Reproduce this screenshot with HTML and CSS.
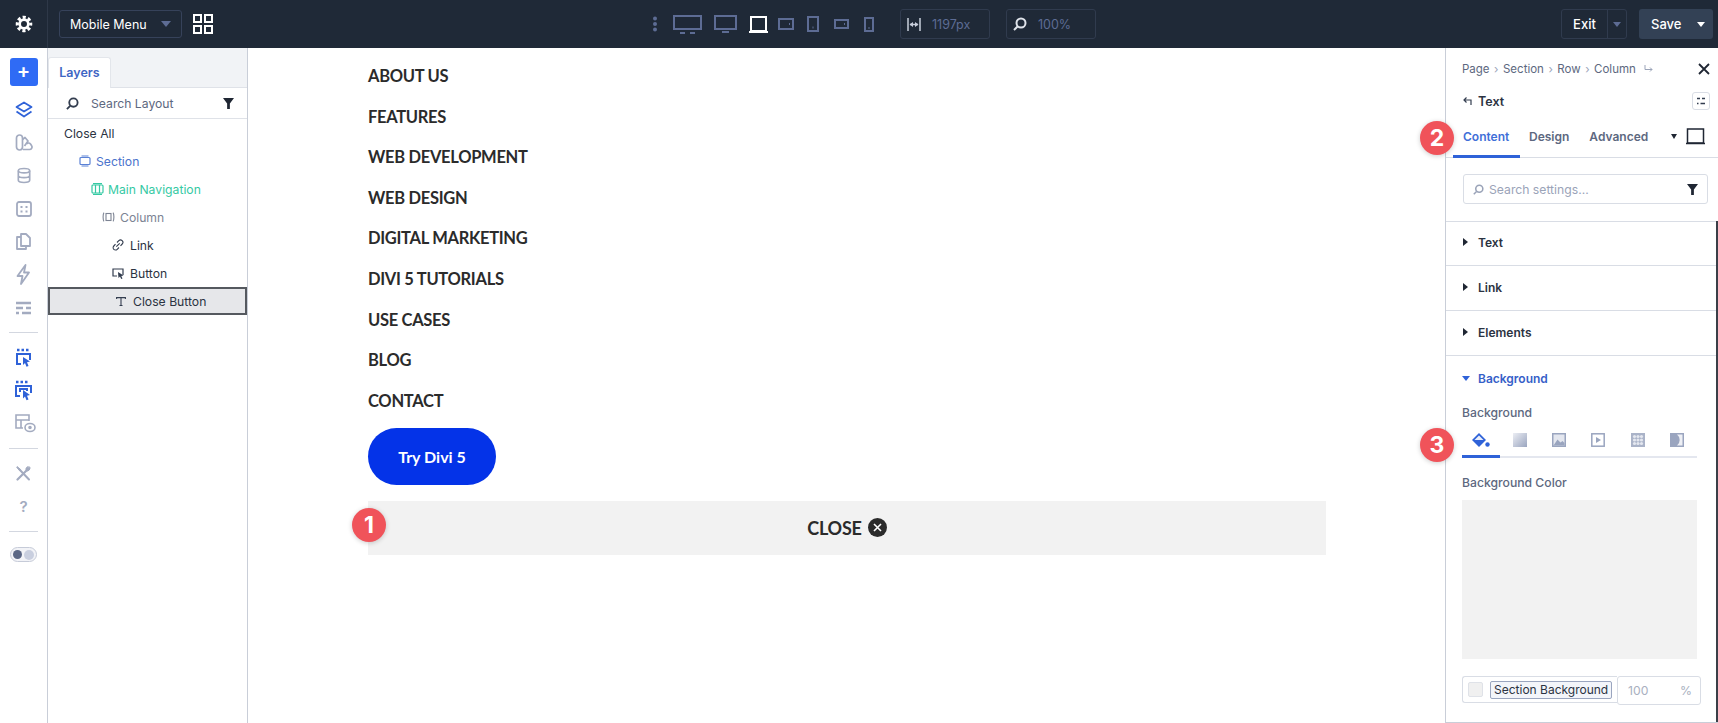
FILE: index.html
```html
<!DOCTYPE html>
<html lang="en">
<head>
<meta charset="utf-8">
<title>Mobile Menu</title>
<link rel="stylesheet" href="styles.css">
</head>
<body>
<header class="topbar">
  <div class="gear-cell">
    <svg width="18" height="18" viewBox="0 0 20 20" fill="none" stroke="#fff"><circle cx="10" cy="10" r="7.500" stroke-width="3.400" stroke-dasharray="3.400 2.490" stroke-dashoffset="1.700"/><circle cx="10" cy="10" r="4.800" stroke-width="3"/></svg>
  </div>
  <div class="select"><span>Mobile Menu</span><i class="caret caret-dim caret-lg"></i></div>
  <svg class="grid-icon" width="20" height="20" viewBox="0 0 20 20" fill="none" stroke="#fff" stroke-width="2"><rect x="1" y="1" width="7" height="7"/><rect x="12" y="1" width="7" height="7"/><rect x="1" y="12" width="7" height="7"/><rect x="12" y="12" width="7" height="7"/></svg>

  <div class="devices">
    <svg width="6" height="16" viewBox="0 0 6 16" fill="#5d6c94"><circle cx="3" cy="2.500" r="2"/><circle cx="3" cy="8" r="2"/><circle cx="3" cy="13.500" r="2"/></svg>
    <svg class="d1" width="29" height="19" viewBox="0 0 29 19" fill="none" stroke="#5d6c94" stroke-width="2"><rect x="1" y="1" width="27" height="13"/><path d="M7 18h5M17 18h5"/></svg>
    <svg class="d2" width="23" height="18" viewBox="0 0 23 18" fill="none" stroke="#5d6c94" stroke-width="2"><rect x="1" y="1" width="21" height="13"/><path d="M8 17h7"/></svg>
    <svg class="d3" width="19" height="17" viewBox="0 0 19 17" fill="none" stroke="#fff" stroke-width="2"><rect x="2" y="1" width="15" height="14"/><path d="M0 16h19"/></svg>
    <svg class="d4" width="16" height="12" viewBox="0 0 16 12" fill="none" stroke="#5d6c94" stroke-width="2"><rect x="1" y="1" width="14" height="10"/><path d="M11 6h1"/></svg>
    <svg class="d5" width="12" height="16" viewBox="0 0 12 16" fill="none" stroke="#5d6c94" stroke-width="2"><rect x="1" y="1" width="10" height="14"/><path d="M5.500 11.500h1"/></svg>
    <svg class="d6" width="15" height="10" viewBox="0 0 15 10" fill="none" stroke="#5d6c94" stroke-width="2"><rect x="1" y="1" width="13" height="8"/><path d="M10 5h1"/></svg>
    <svg class="d7" width="10" height="15" viewBox="0 0 10 15" fill="none" stroke="#5d6c94" stroke-width="2"><rect x="1" y="1" width="8" height="13"/><path d="M4.500 11h1"/></svg>
  </div>

  <div class="field field-width">
    <svg width="14" height="13" viewBox="0 0 14 13" fill="none" stroke="#c9cfdc" stroke-width="1.500"><path d="M1 0v13M13 0v13M3 6.500h8"/><path fill="#c9cfdc" stroke="none" d="M2.500 6.500 6 4v5zM11.500 6.500 8 4v5z"/></svg>
    <span>1197px</span>
  </div>
  <div class="field field-zoom">
    <svg width="14" height="14" viewBox="0 0 14 14" fill="none" stroke="#dfe3ea" stroke-width="2"><circle cx="8" cy="6" r="4.500"/><path d="M4.500 9.500 1 13"/></svg>
    <span>100%</span>
  </div>

  <div class="exit">
    <span class="exit-label">Exit</span>
    <span class="exit-caret"><i class="caret caret-dim"></i></span>
  </div>
  <div class="save"><span>Save</span><i class="caret caret-white"></i></div>
</header>

<div class="workspace">
  <nav class="rail">
    <div class="plus">+</div>
    <div class="rail-item">
      <svg width="18" height="18" viewBox="0 0 18 18" fill="none" stroke="#2f62d8" stroke-width="1.800" stroke-linejoin="round"><path d="M9 1.500 16.500 6 9 10.500 1.500 6z"/><path d="M1.500 10.500 9 15.500l7.500-5"/></svg>
    </div>
    <div class="rail-item">
      <svg width="18" height="17" viewBox="0 0 18 17" fill="none" stroke="#a3abc0" stroke-width="1.700" stroke-linejoin="round"><path d="M1.500 4a3 3 0 0 1 6 0v9a3 3 0 0 1-6 0z"/><path d="M7.500 5.500 10 3.500l3 3.500-3.500 5M8 15.500h6.500a2.500 2.500 0 0 0 2-4l-1-1.500a2.500 2.500 0 0 0-4 0"/></svg>
    </div>
    <div class="rail-item">
      <svg width="14" height="17" viewBox="0 0 16 18" fill="none" stroke="#a3abc0" stroke-width="1.900"><ellipse cx="8" cy="3.500" rx="6.500" ry="2.500"/><path d="M1.500 3.500v11c0 1.400 3 2.500 6.500 2.500s6.500-1.100 6.500-2.500v-11M1.500 9c0 1.400 3 2.500 6.500 2.500s6.500-1.100 6.500-2.500"/></svg>
    </div>
    <div class="rail-item">
      <svg width="16" height="16" viewBox="0 0 16 16" fill="none" stroke="#a3abc0" stroke-width="1.800"><rect x="1" y="1" width="14" height="14" rx="2"/><path d="M4.500 6h2M9.500 6h2M4.500 10.500h2M9.500 10.500h2"/></svg>
    </div>
    <div class="rail-item">
      <svg width="15" height="17" viewBox="0 0 15 17" fill="none" stroke="#a3abc0" stroke-width="1.800" stroke-linejoin="round"><path d="M5 1h5l4 4v8H5z"/><path d="M5 4H1v12h9v-3"/></svg>
    </div>
    <div class="rail-item">
      <svg width="15" height="21" viewBox="0 0 15 21" fill="none" stroke="#a3abc0" stroke-width="1.800" stroke-linejoin="round"><path d="M9.500 1 1.500 12h5l-1.500 8 8-11.500H8z"/></svg>
    </div>
    <div class="rail-item">
      <svg width="15" height="14" viewBox="0 0 15 14" fill="none" stroke="#a3abc0" stroke-width="2.400"><path d="M0 2h15M0 7h7M10 7h5M0 12h3M6 12h9"/></svg>
    </div>
    <hr class="rail-sep">
    <div class="rail-item">
      <svg width="15" height="20" viewBox="0 0 15 20" fill="none" stroke="#2f62d8" stroke-width="2"><path d="M1 2h2.500M5.500 2H8M10 2h2.500" stroke-width="2.400"/><path d="M5 16H1V6h13v6"/><path fill="#2f62d8" stroke="none" d="M7 9l7 4.500-3 .8 1.500 3.700-2 .8-1.500-3.700-2 2z"/></svg>
    </div>
    <div class="rail-item">
      <svg width="17" height="21" viewBox="0 0 17 21" fill="none" stroke="#2f62d8" stroke-width="2"><path d="M1 2h2.500M5.500 2H8M10 2h2.500" stroke-width="2.400"/><path d="M5 16H1V6h15v7M5 12V9h7v2"/><path fill="#2f62d8" stroke="none" d="M8 10l7 5-3 .8 1.500 3.700-2 .8-1.500-3.700-2 2z"/></svg>
    </div>
    <div class="rail-item">
      <svg class="shift" width="21" height="19" viewBox="0 0 21 19" fill="none" stroke="#a3abc0" stroke-width="1.600"><path d="M8 14H1V1h13v6M1 6h13M6 6v8"/><ellipse cx="15" cy="13.500" rx="5" ry="4"/><circle cx="15" cy="13.500" r="1" fill="#a3abc0"/></svg>
    </div>
    <hr class="rail-sep">
    <div class="rail-item">
      <svg width="15" height="15" viewBox="0 0 15 15" fill="none" stroke="#a3abc0" stroke-linecap="round"><path d="M3 3 13 13.500" stroke-width="2"/><path d="M1.500 .8 4.500 3.500 3.500 4.500.8 1.500z" fill="#a3abc0" stroke-width="1"/><path d="M10.500 4.500 1.500 13.500" stroke-width="2.200"/><path d="M14 1.500a3 3 0 0 1-3.500 3.500 3 3 0 0 1 .5-4z" fill="#a3abc0" stroke-width="1"/></svg>
    </div>
    <div class="rail-item rail-q">?</div>
    <hr class="rail-sep">
    <div class="toggle"><i class="toggle-on"></i><i class="toggle-off"></i></div>
  </nav>

  <aside class="layers">
    <div class="tabs"><div class="tab">Layers</div></div>
    <div class="layer-search">
      <svg width="13" height="13" viewBox="0 0 14 14" fill="none" stroke="#333d4f" stroke-width="2"><circle cx="8" cy="6" r="4.500"/><path d="M4.500 9.500 1 13"/></svg>
      <span>Search Layout</span>
      <svg class="funnel" width="11" height="11" viewBox="0 0 12 12"><path fill="#1f2633" d="M0 0h12L7.500 6v6h-3V6z"/></svg>
    </div>
    <ul class="tree">
      <li class="row row-0">Close All</li>
      <li class="row row-1 c-blue">
        <svg width="12" height="12" viewBox="0 0 12 12" fill="none" stroke="#5b82d6" stroke-width="1.200"><rect x="1" y="2.500" width="10" height="7" rx="1"/><path d="M2.500 1h7M2.500 11h7"/></svg>Section
      </li>
      <li class="row row-2 c-green">
        <svg width="13" height="12" viewBox="0 0 13 12" fill="none" stroke="#35c9a3" stroke-width="1.200"><rect x="1" y="2" width="11" height="8" rx="1"/><path d="M4.500 2v8M8.500 2v8M2 .700h9M2 11.300h9"/></svg>Main Navigation
      </li>
      <li class="row row-3 c-gray">
        <svg width="13" height="10" viewBox="0 0 13 10" fill="none" stroke="#7c8393" stroke-width="1.100"><rect x="4" y="1.500" width="5" height="7"/><path d="M2 .700C.800 2 .800 8 2 9.300M11 .700c1.200 1.300 1.200 7.300 0 8.600"/></svg>Column
      </li>
      <li class="row row-4">
        <svg width="12" height="12" viewBox="0 0 12 12" fill="none" stroke="#333d4f" stroke-width="1.100"><path d="M5 3.500 6.800 1.700a2.300 2.300 0 0 1 3.400 3.300L8.500 6.800M7 8.500 5.200 10.300A2.300 2.300 0 0 1 1.800 7L3.500 5.200M4.300 7.700l3.400-3.400"/></svg>Link
      </li>
      <li class="row row-4">
        <svg width="12" height="11" viewBox="0 0 12 11" fill="none" stroke="#333d4f" stroke-width="1.200"><path d="M5 8H1V1h10v6"/><path fill="#333d4f" stroke="none" d="m6 4 5.500 3.500-2.200.6 1.200 2.400-1.300.5-1.200-2.400-1.500 1.400z"/></svg>Button
      </li>
      <li class="row row-sel">
        <svg width="10" height="9" viewBox="0 0 10 9" fill="none" stroke="#333d4f" stroke-width="1.100"><path d="M.6 2V.6h8.800V2M5 .6v8M3.500 8.500h3"/></svg>Close Button
      </li>
    </ul>
  </aside>

  <main class="canvas">
    <ul class="menu">
      <li>ABOUT US</li>
      <li>FEATURES</li>
      <li>WEB DEVELOPMENT</li>
      <li>WEB DESIGN</li>
      <li>DIGITAL MARKETING</li>
      <li>DIVI 5 TUTORIALS</li>
      <li>USE CASES</li>
      <li>BLOG</li>
      <li>CONTACT</li>
    </ul>
    <a class="try">Try Divi 5</a>
    <div class="close-bar">
      <span class="badge badge-1">1</span>
      <span>CLOSE</span>
      <svg width="19" height="19" viewBox="0 0 19 19"><circle cx="9.500" cy="9.500" r="9.500" fill="#2b2b2b"/><path d="m6 6 7 7M13 6l-7 7" stroke="#fff" stroke-width="1.600" fill="none"/></svg>
    </div>
  </main>

  <aside class="settings">
    <div class="crumbs">
      <span>Page</span><b>›</b><span>Section</span><b>›</b><span>Row</span><b>›</b><span>Column</span>
      <svg class="crumb-arrow" width="9" height="8" viewBox="0 0 9 8" fill="none" stroke="#9aa3b8" stroke-width="1"><path d="M1 0v4.500h7M6 2.500l2 2-2 2"/></svg>
      <svg class="crumb-close" width="12" height="12" viewBox="0 0 12 12" stroke="#1f2633" stroke-width="1.800"><path d="m1 1 10 10M11 1 1 11"/></svg>
    </div>
    <div class="title-row">
      <svg width="9" height="8" viewBox="0 0 9 8" fill="none" stroke="#333d4f" stroke-width="1.200"><path d="M8 8V3H1M3.500.5 1 3l2.500 2.500"/></svg>
      <span>Text</span>
      <div class="mini-btn">
        <svg width="10" height="8" viewBox="0 0 10 8" stroke="#333d4f" stroke-width="1.600"><path d="M1 1.500h3M6 1.500h3M1 6.500h1.500M4.500 6.500H9"/></svg>
      </div>
    </div>
    <div class="tabs-row">
      <span class="badge badge-2">2</span>
      <span class="st-tab st-active">Content</span>
      <span class="st-tab">Design</span>
      <span class="st-tab">Advanced</span>
      <i class="caret caret-dark"></i>
      <svg class="tab-view" width="19" height="17" viewBox="0 0 19 17" fill="none" stroke="#1f2633" stroke-width="1.500"><rect x="1.500" y="1" width="16" height="14"/><path d="M0 15.500h19"/></svg>
    </div>
    <div class="search-wrap">
      <div class="search">
        <svg width="11" height="11" viewBox="0 0 14 14" fill="none" stroke="#9aa3b8" stroke-width="2"><circle cx="8" cy="6" r="4.500"/><path d="M4.500 9.500 1 13"/></svg>
        <span>Search settings...</span>
        <svg class="funnel" width="11" height="11" viewBox="0 0 12 12"><path fill="#1f2633" d="M0 0h12L7.500 6v6h-3V6z"/></svg>
      </div>
    </div>
    <div class="scroll">
      <div class="acc"><i class="tri"></i>Text</div>
      <div class="acc"><i class="tri"></i>Link</div>
      <div class="acc"><i class="tri"></i>Elements</div>
      <div class="bg-section">
        <div class="bg-head"><i class="caret caret-blue"></i>Background</div>
        <div class="label label-bg">Background</div>
        <div class="bg-tabs">
          <span class="badge badge-3">3</span>
          <span class="bg-tab bg-tab-on">
            <svg width="19" height="16" viewBox="0 0 19 16"><path fill="#2f62d8" d="M8 1 15 8 8 15 1 8z"/><path fill="#fff" d="M8 3.500 12.500 8h-9z" opacity=".9"/><circle cx="16.500" cy="12.500" r="2.200" fill="#2f62d8"/></svg>
          </span>
          <span class="bg-tab"><i class="grad"></i></span>
          <span class="bg-tab">
            <svg width="14" height="14" viewBox="0 0 14 14"><rect width="14" height="14" fill="#9aa5bf"/><rect x="1.500" y="1.500" width="11" height="11" fill="#e4e7ef"/><path fill="#9aa5bf" d="m1.500 12.500 4-6 3 3 2-1.500 2 2v2.500z"/></svg>
          </span>
          <span class="bg-tab">
            <svg width="14" height="14" viewBox="0 0 14 14" fill="none" stroke="#9aa5bf" stroke-width="1.500"><rect x=".8" y=".8" width="12.400" height="12.400"/><path fill="#9aa5bf" stroke="none" d="m5 4 5 3-5 3z"/></svg>
          </span>
          <span class="bg-tab">
            <svg width="14" height="14" viewBox="0 0 14 14"><rect width="14" height="14" fill="#aab3c8"/><g fill="#e4e7ef"><circle cx="3.500" cy="3.500" r="1.600"/><circle cx="7" cy="3.500" r="1.600"/><circle cx="10.500" cy="3.500" r="1.600"/><circle cx="3.500" cy="7" r="1.600"/><circle cx="7" cy="7" r="1.600"/><circle cx="10.500" cy="7" r="1.600"/><circle cx="3.500" cy="10.500" r="1.600"/><circle cx="7" cy="10.500" r="1.600"/><circle cx="10.500" cy="10.500" r="1.600"/></g></svg>
          </span>
          <span class="bg-tab">
            <svg width="14" height="14" viewBox="0 0 14 14"><rect width="14" height="14" fill="#9aa5bf"/><path fill="#eef0f5" d="M7 1.500h5.500v11H7a7 7 0 0 0 0-11z"/></svg>
          </span>
        </div>
        <div class="label label-color">Background Color</div>
        <div class="swatch-box"></div>
        <div class="color-row">
          <div class="color-left">
            <i class="chip"></i>
            <span class="color-name">Section Background</span>
          </div>
          <div class="opacity"><span>100</span><span>%</span></div>
        </div>
      </div>
    </div>
  </aside>
</div>
</body>
</html>
```

FILE: styles.css
```css
* { box-sizing: border-box; }
html, body { margin: 0; padding: 0; height: 100%; overflow: hidden; }
body { font-family: Inter, "Liberation Sans", sans-serif; background: #fff; color: #1f2633; }
ul { list-style: none; margin: 0; padding: 0; }
i { display: block; }

.topbar { height: 48px; background: #1f2937; display: flex; align-items: center; color: #fff; }
.gear-cell { width: 48px; height: 48px; display: flex; align-items: center; justify-content: center; border-right: 1px solid #2e3848; }
.select { width: 123px; height: 28px; margin-left: 11px; border: 1px solid #36425a; border-radius: 3px; display: flex; align-items: center; justify-content: space-between; padding: 0 10px 0 10px; font-size: 12.500px; }
.grid-icon { margin-left: 11px; }
.caret { width: 0; height: 0; border-left: 4px solid transparent; border-right: 4px solid transparent; border-top: 5px solid; }
.caret-lg { border-left-width: 5.500px; border-right-width: 5.500px; border-top-width: 6px; }
.caret-dim { border-top-color: #5d6c94; }
.caret-white { border-top-color: #fff; }
.caret-dark { border-top-color: #1f2633; border-left-width: 3.500px; border-right-width: 3.500px; }
.caret-blue { border-top-color: #2f62d8; }

.devices { display: flex; align-items: center; margin-left: 439px; width: 248px; }
.devices svg { flex: none; }
.d1 { margin-left: 15px; }
.d2 { margin-left: 12px; }
.d3 { margin-left: 12px; }
.d4 { margin-left: 10px; }
.d5 { margin-left: 13px; }
.d6 { margin-left: 15px; }
.d7 { margin-left: 15px; }

.field { height: 30px; width: 90px; border: 1px solid #303b4e; border-radius: 3px; display: flex; align-items: center; gap: 11px; padding-left: 6px; font-size: 12.500px; color: #5d6c94; }
.field-zoom { margin-left: 16px; }

.exit { margin-left: 465px; height: 30px; width: 66px; border: 1px solid #303b4e; border-radius: 3px; display: flex; align-items: center; font-size: 13px; font-weight: 500; }
.exit-label { width: 46px; text-align: center; border-right: 1px solid #303b4e; line-height: 28px; }
.exit-caret { flex: 1; display: flex; justify-content: center; }
.save { margin-left: 12px; height: 30px; width: 74px; background: #334155; border-radius: 3px; display: flex; align-items: center; justify-content: space-between; padding: 0 8px 0 12px; font-size: 13px; font-weight: 500; }

.workspace { display: flex; height: 675px; }

.rail { width: 48px; flex: none; border-right: 1px solid #c9ced8; padding-top: 10px; display: flex; flex-direction: column; align-items: center; }
.plus { width: 28px; height: 28px; background: #2f6bf5; border-radius: 3px; color: #fff; font-size: 20px; font-weight: 600; line-height: 26px; text-align: center; margin-bottom: 7px; }
.rail-item { height: 33px; width: 100%; display: flex; align-items: center; justify-content: center; flex: none; }
.shift { margin-left: 4px; }
.rail-q { font-size: 15px; font-weight: 600; color: #a3abc0; }
.rail-sep { width: 29px; height: 1px; background: #d3d7e0; border: 0; margin: 8px 0 8px; flex: none; }
.toggle { width: 27px; height: 15px; border: 1px solid #c6cbd8; border-radius: 8px; background: #f2f3f7; display: flex; align-items: center; justify-content: space-between; padding: 0 2px; margin-top: 7px; }
.toggle-on { width: 9px; height: 9px; border-radius: 50%; background: #5b6785; }
.toggle-off { width: 10px; height: 10px; border-radius: 50%; background: #c9cfdf; }

.layers { width: 200px; flex: none; border-right: 1px solid #c9ced8; }
.tabs { height: 40px; background: #f1f3f6; border-bottom: 1px solid #dfe2e8; padding-top: 9px; display: flex; }
.tab { width: 63px; height: 31px; background: #fff; border: 1px solid #e3e6eb; border-bottom: 0; border-radius: 3px 3px 0 0; font-size: 12.500px; font-weight: 600; color: #3f66c4; text-align: center; line-height: 30px; }
.layer-search { height: 31px; display: flex; align-items: center; padding: 0 13px 0 18px; border-bottom: 1px solid #dfe2e8; font-size: 12.200px; color: #5d6880; gap: 12px; }
.funnel { margin-left: auto; }
.tree { font-size: 12.200px; }
.row { height: 28px; display: flex; align-items: center; gap: 5px; color: #2b3342; }
.row-0 { padding-left: 16px; }
.row-1 { padding-left: 31px; }
.row-2 { padding-left: 43px; gap: 4px; }
.row-3 { padding-left: 54px; }
.row-4 { padding-left: 64px; gap: 6px; }
.c-blue { color: #4b73cc; }
.c-green { color: #35c9a3; }
.c-gray { color: #7c8393; }
.row-sel { background: #e6e7ea; border: 2px solid #55595f; padding-left: 66px; gap: 7px; }

.canvas { flex: none; width: 1197px; padding-left: 120px; }
.menu { padding-top: 12px; font-family: Lato, "Liberation Sans", sans-serif; font-weight: 700; font-size: 16.500px; letter-spacing: -0.300px; color: #2b2b2b; }
.menu li { height: 40.600px; line-height: 32px; }
.try { display: block; width: 128px; height: 57px; margin-top: 3px; background: #0433e8; border-radius: 29px; color: #fff; font-family: Lato, "Liberation Sans", sans-serif; font-weight: 700; font-size: 16px; text-align: center; line-height: 57px; }
.close-bar { position: relative; width: 958px; height: 54px; margin-top: 15.500px; background: #f2f2f2; display: flex; align-items: center; justify-content: center; gap: 6px; font-family: Lato, "Liberation Sans", sans-serif; font-weight: 700; font-size: 18px; letter-spacing: -0.200px; color: #2b2b2b; }

.badge { position: absolute; width: 34px; height: 34px; border-radius: 50%; background: #f0535a; color: #fff; font-family: Inter, "Liberation Sans", sans-serif; font-weight: 700; font-size: 23px; letter-spacing: 0; line-height: 34px; text-align: center; box-shadow: 0 1px 5px rgba(0,0,0,.2); z-index: 2; }
.badge-1 { left: -16px; top: 7px; }
.badge-2 { left: -26px; top: 1px; }
.badge-3 { left: -42px; top: 4px; }

.settings { position: relative; width: 273px; min-width: 0; flex: none; border-left: 1px solid #c9ced8; border-bottom: 1px solid #c9ced8; }
.crumbs { display: flex; align-items: center; padding: 8px 0 0 16px; height: 34px; font-size: 11.500px; color: #5d6880; gap: 4.500px; }
.crumbs b { font-weight: 400; color: #9aa3b8; }
.crumb-arrow { margin-left: 4px; }
.crumb-close { margin-left: auto; margin-right: 8px; }
.title-row { display: flex; align-items: center; height: 36px; padding: 2px 8px 0 17px; font-size: 12.500px; font-weight: 600; color: #2b3342; gap: 6px; }
.mini-btn { margin-left: auto; width: 18px; height: 18px; border: 1px solid #d9dde5; border-radius: 3px; display: flex; align-items: center; justify-content: center; }
.tabs-row { position: relative; display: flex; align-items: flex-start; height: 38px; margin-top: 2px; border-bottom: 1px solid #d9dde5; padding-left: 7px; font-size: 12px; font-weight: 600; color: #5d6880; }
.st-tab { height: 36px; line-height: 33px; padding: 0 10px; }
.st-active { color: #3f6fd8; height: 38px; border-bottom: 3px solid #2f62d8; width: 67px; margin-right: -1px; }
.tabs-row .caret { margin: 14px 0 0 13px; }
.tab-view { margin: 8px 0 0 9px; }
.search-wrap { height: 64px; padding: 16px 10px 0 17px; border-bottom: 1px solid #d9dde5; }
.search { height: 30px; border: 1px solid #d9dde5; border-radius: 3px; display: flex; align-items: center; padding: 0 9px; gap: 5px; font-size: 12.200px; color: #9aa3b8; }
.scroll { border-right: 2px solid #3a3f48; height: 501px; margin-top: -1px; }
.acc { height: 45px; border-bottom: 1px solid #d9dde5; display: flex; align-items: center; padding: 0 0 2px 17px; gap: 10px; font-size: 12px; font-weight: 600; color: #2b3342; }
.tri { width: 0; height: 0; border-top: 4px solid transparent; border-bottom: 4px solid transparent; border-left: 5px solid #1f2633; }
.bg-section { padding: 0 0 0 16px; }
.bg-head { height: 45px; display: flex; align-items: center; gap: 8px; font-size: 12px; font-weight: 600; color: #3560c8; }
.label { font-size: 12.200px; color: #5d6880; font-weight: 500; }
.label-bg { margin-top: 2px; line-height: 20px; }
.bg-tabs { position: relative; display: flex; height: 34px; margin-top: 1px; border-bottom: 2px solid #e4e7ef; width: 235px; }
.bg-tab { width: 39.500px; height: 32px; display: flex; align-items: center; justify-content: center; }
.bg-tab-on { border-bottom: 3px solid #2f62d8; width: 38px; height: 34px; }
.grad { width: 14px; height: 14px; background: linear-gradient(135deg, #eceef4, #9aa5bf); }
.label-color { margin-top: 15px; line-height: 20px; }
.swatch-box { width: 235px; height: 159px; margin-top: 7px; background: #f2f2f2; }
.color-row { display: flex; margin-top: 17px; width: 239px; }
.color-left { width: 155px; height: 27px; border: 1px solid #d9dde5; border-right: 0; border-radius: 3px 0 0 3px; display: flex; align-items: center; padding-left: 5px; gap: 7px; }
.chip { width: 15px; height: 15px; flex: none; background: #f0f0f0; border: 1px solid #dfe2e8; border-radius: 2px; }
.color-name { flex: none; font-size: 12px; color: #2b3342; background: #f3f5fa; border: 1px solid #9aa5bf; border-radius: 2px; height: 18px; line-height: 16px; padding: 0 3px; white-space: nowrap; }
.opacity { width: 84px; height: 29px; border: 1px solid #d9dde5; border-radius: 3px; display: flex; align-items: center; justify-content: space-between; padding: 0 8px 0 10px; font-size: 12.200px; color: #a9b0c0; }
```
